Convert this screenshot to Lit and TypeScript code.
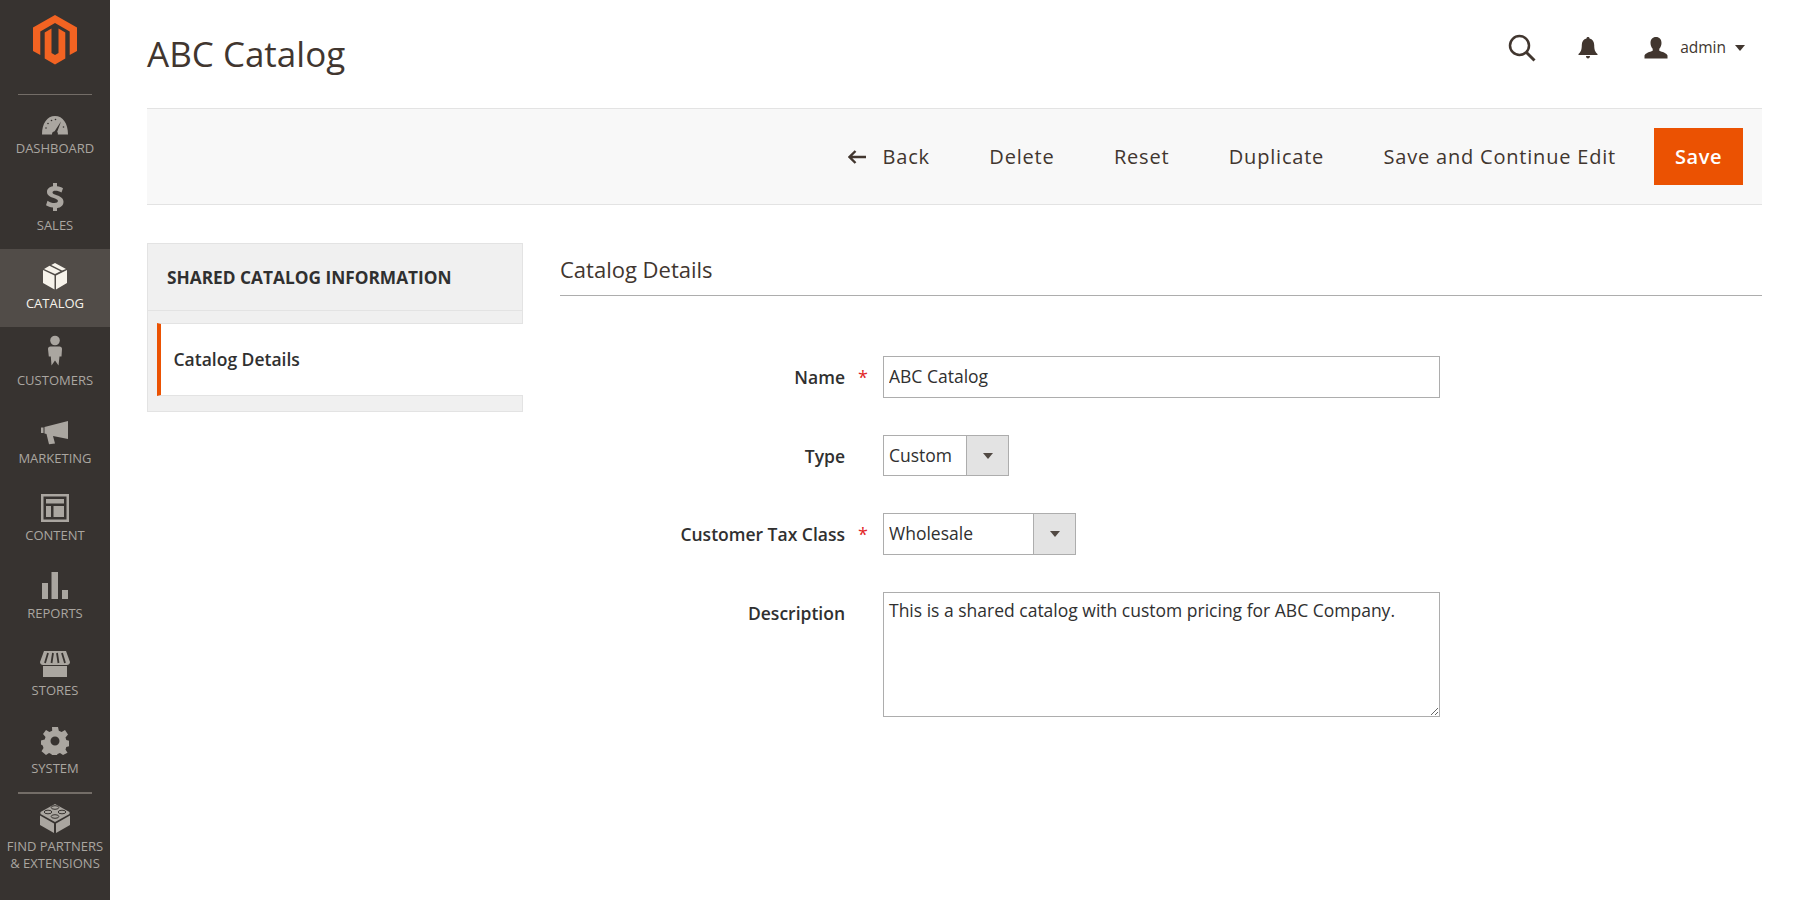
import { LitElement, html, css, svg } from "lit";
import { customElement } from "lit/decorators.js";

const icons: Record<string, unknown> = {
  dashboard: svg`<svg width="28" height="20" viewBox="0 0 28 20"><path fill-rule="evenodd" fill="currentColor" d="M1 19.500C1 8.500 6 1 14 1s13 7.500 13 18.500H16.800a3 3 0 0 0-.6-2.800L20 6.500l-6.400 9.700a3.200 3.200 0 0 0-2.600 3.300Z"/><g fill="#373330"><circle cx="5" cy="13" r=".8"/><circle cx="7" cy="8.500" r=".8"/><circle cx="10.500" cy="5.500" r=".8"/><circle cx="14.500" cy="4.500" r=".8"/><circle cx="22.500" cy="12" r=".8"/></g></svg>`,
  sales: svg`<svg width="20" height="30" viewBox="0 0 20 30"><path fill="currentColor" d="M8 1h4v3.200c2.500.3 4.500 1 6 2l-1.500 4.300c-2-1.200-4-1.800-6-1.800-2 0-3 .7-3 1.700 0 1.200 1.400 1.800 4.300 2.800 4.500 1.500 6.700 3.300 6.700 6.600 0 3.500-2.400 5.800-6.500 6.400V29H8v-3.600c-2.800-.2-5.200-1-7-2.200l1.500-4.400c2.200 1.400 4.700 2.300 7 2.300 2.200 0 3.400-.8 3.400-2 0-1.300-1.300-2-4.100-3C4.300 14.700 2 13 2 9.800 2 6.900 4.200 4.700 8 4.200Z"/></svg>`,
  catalog: svg`<svg width="26" height="28" viewBox="0 0 26 28"><path fill="currentColor" d="M12.500 13.500 1 8v13l11.500 6.500Zm1.500 0V27.500L25 21V8Zm-1-1.500L2 7l5.500-3.200 11 5.400Zm7-3.600L9.200 3 13 1l11 6Z"/></svg>`,
  customers: svg`<svg width="16" height="32" viewBox="0 0 16 32"><circle cx="8" cy="5.500" r="4.800" fill="currentColor"/><path fill="currentColor" d="M3.500 11.500h9c1.600 0 2.500 1 2.500 2.500l-.5 7.500h-2L11.500 30.500 8 25.500l-3.500 5-.7-9h-2L1 14c0-1.500.9-2.500 2.500-2.500Z"/></svg>`,
  marketing: svg`<svg width="28" height="24" viewBox="0 0 28 24"><path fill="currentColor" d="M0 6.500h2.500v5.500H0Zm3.500-.5L27 0v18l-15-3 2 7.500-6 .7L5.500 13l-2-.5Z"/></svg>`,
  content: svg`<svg width="28" height="28" viewBox="0 0 28 28"><path fill-rule="evenodd" fill="currentColor" d="M0 0h28v28H0Zm2.500 2.500v23h23v-23ZM5 5h18v4.500H5Zm0 7h5v11H5Zm7.500 0H23v11H12.500Z"/></svg>`,
  reports: svg`<svg width="26" height="28" viewBox="0 0 26 28"><path fill="currentColor" d="M0 11h6v16H0Zm9.500-11H16v27H9.500ZM20 18h6v9h-6Z"/></svg>`,
  stores: svg`<svg width="30" height="26" viewBox="0 0 30 26"><path fill="currentColor" d="M4 0h22l4 11c0 2-1.500 3-3 3H3c-1.500 0-3-1-3-3Z"/><path fill="currentColor" d="M3 15h24v11H3Z"/><path stroke="#373330" stroke-width="1.800" fill="none" d="M8 2 5 12M13 2l-1.500 10M17 2l1.500 10M22 2l3 10"/></svg>`,
  system: svg`<svg width="28" height="28" viewBox="0 0 28 28"><path fill-rule="evenodd" fill="currentColor" d="M11 0h6l.8 3.800 2.800 1.200L24 3l3 4.500-2.500 3 .8 2.500 3.700 1v5l-3.700 1-.8 2.500 2 3.200L22 28l-3-2-2.500 1-.5 1h-5l-.8-1L8 26l-3 2-4.500-3.800 2-3.200-.8-2.500L0 17.500v-4l3.700-1 .8-2.500-2.500-3L5 3l3.400 2 2.800-1.200Zm3 9.500a4.500 4.500 0 1 0 0 9 4.500 4.500 0 0 0 0-9Z"/></svg>`,
  partners: svg`<svg width="30" height="29" viewBox="0 0 30 29"><path fill="currentColor" d="M15 0 29.500 8v2L15 18 .5 10V8Z"/><path fill="currentColor" d="M0 11.500 14 19.500V29L0 21Zm30 0V21l-14 8V19.500Z"/><g fill="none" stroke="#373330" stroke-width="1"><ellipse cx="15" cy="3.500" rx="3.800" ry="1.800"/><ellipse cx="8" cy="8" rx="3.800" ry="1.800"/><ellipse cx="22" cy="8" rx="3.800" ry="1.800"/><ellipse cx="15" cy="12.500" rx="3.800" ry="1.800"/></g></svg>`,
};

const menu = [
  ["dashboard", "DASHBOARD"],
  ["sales", "SALES"],
  ["catalog", "CATALOG"],
  ["customers", "CUSTOMERS"],
  ["marketing", "MARKETING"],
  ["content", "CONTENT"],
  ["reports", "REPORTS"],
  ["stores", "STORES"],
  ["system", "SYSTEM"],
];

@customElement("app-root")
export class AppRoot extends LitElement {
  static styles = css`
    :host {
      display: block;
      height: 900px;
      overflow: hidden;
      background: #fff;
      font-family: "Open Sans", sans-serif;
      color: #303030;
    }
    .page { display: flex; height: 900px; }
    .side {
      width: 110px;
      flex: none;
      background: #373330;
      color: #aaa6a0;
      display: flex;
      flex-direction: column;
      align-items: stretch;
      font-size: 13px;
      text-align: center;
    }
    .logo { display: flex; justify-content: center; padding-top: 15px; height: 79px; box-sizing: content-box; }
    .rule { height: 1px; background: #736d67; margin: 0 18px -1px; }
    .rule.low { margin: 0 18px; height: 2px; }
    .item {
      height: 77.5px;
      box-sizing: border-box;
      display: flex;
      flex-direction: column;
      align-items: center;
      justify-content: flex-end;
      padding-bottom: 15.600px;
      line-height: 16px;
      flex: none;
    }
    .item svg { display: block; margin-bottom: 5px; }
    .item.active { background: #514c48; color: #f7f3eb; }
    .foot { align-items: center; display: flex; flex-direction: column; padding-top: 10px; line-height: 17px; color: #aaa6a0; }
    .foot svg { display: block; margin-bottom: 5px; }

    .main { flex: 1; padding: 0 35px 0 37px; min-width: 0; }
    .top { height: 108px; display: flex; align-items: flex-start; justify-content: space-between; }
    h1 {
      margin: 31px 0 0;
      font-weight: 400;
      font-size: 35px;
      line-height: 46px;
      color: #41362f;
    }
    .actions { display: flex; align-items: center; padding-top: 34px; padding-right: 17px; color: #41362f; }
    .actions .s { margin-right: 42px; display: block; }
    .actions .b { margin-right: 46px; display: block; }
    .user { display: flex; align-items: center; font-size: 15.500px; color: #41362f; }
    .user svg { display: block; }
    .user span { margin: -2px 9px 0 12px; }
    .tri { width: 0; height: 0; border: 5px solid transparent; border-top: 6px solid #41362f; border-bottom: 0; }
    .toolbar {
      height: 97px;
      box-sizing: border-box;
      background: #f8f8f8;
      border-top: 1px solid #e3e3e3;
      border-bottom: 1px solid #e3e3e3;
      display: flex;
      align-items: center;
      justify-content: flex-end;
      padding-right: 19px;
      font-size: 20px;
      letter-spacing: 0.8px;
      color: #41362f;
      font-weight: 400;
    }
    .toolbar .lnk { margin-right: 59.400px; display: flex; align-items: center; }
    .toolbar .lnk.last { margin-right: 38px; }
    .toolbar svg { margin-right: 17px; display: block; }
    .save {
      background: #eb5202;
      color: #fff;
      font-weight: 600;
      width: 89px;
      height: 57px;
      display: flex;
      align-items: center;
      justify-content: center;
      letter-spacing: 0.5px;
    }
    .content { display: flex; padding-top: 38px; align-items: flex-start; }
    .panel {
      width: 376px;
      height: 169px;
      box-sizing: border-box;
      flex: none;
      background: #f0f0f0;
      border: 1px solid #e3e3e3;
      margin-right: 37px;
      display: flex;
      flex-direction: column;
    }
    .panel h3 {
      margin: 0;
      height: 67px;
      box-sizing: border-box;
      border-bottom: 1px solid #e3e3e3;
      padding: 0 0 0 19px;
      display: flex;
      align-items: center;
      font-size: 17.300px;
      font-weight: 700;
      color: #303030;
    }
    .tab {
      margin: 12px -1px 0 9px;
      height: 73px;
      box-sizing: border-box;
      background: #fff;
      border-left: 4px solid #eb5202;
      border-top: 1px solid #e3e3e3;
      border-bottom: 1px solid #e3e3e3;
      padding: 0 0 2px 12.500px;
      display: flex;
      align-items: center;
      font-size: 17.500px;
      font-weight: 600;
      color: #303030;
    }
    .form { flex: 1; min-width: 0; }
    h2 {
      margin: 0;
      height: 53px;
      box-sizing: border-box;
      border-bottom: 1px solid #adadad;
      font-size: 22px;
      font-weight: 400;
      line-height: 53px;
      color: #41362f;
    }
    .rows { padding-top: 60px; display: grid; grid-template-columns: 285px 38px 1fr; row-gap: 37px; align-items: start; }
    label {
      text-align: right;
      font-size: 17.500px;
      font-weight: 600;
      color: #303030;
      line-height: 24px;
      padding-top: 9px;
    }
    .star { color: #e22626; font-size: 18px; line-height: 24px; padding-top: 9px; text-align: right; padding-right: 15px; }
    input, select, textarea {
      font-family: "Open Sans", sans-serif;
      font-size: 17.500px;
      color: #303030;
      border: 1px solid #adadad;
      background: #fff;
      box-sizing: border-box;
      padding: 0 5px 2px;
      outline: none;
      margin: 0;
      display: block;
      border-radius: 0;
    }
    input { width: 557px; height: 42px; }
    textarea { width: 557px; height: 125px; padding-top: 5px; line-height: 24px; }
    .sel { position: relative; height: 42px; }
    .sel.t { width: 126px; height: 41px; }
    .sel.w { width: 193px; }
    select { appearance: none; width: 100%; height: 100%; }
    .arrow {
      position: absolute;
      right: 0;
      top: 0;
      bottom: 0;
      width: 43px;
      box-sizing: border-box;
      background: #e3e3e3;
      border: 1px solid #adadad;
      display: flex;
      align-items: center;
      justify-content: center;
      pointer-events: none;
    }
    .arrow i { width: 0; height: 0; border: 5px solid transparent; border-top: 6px solid #514943; border-bottom: 0; }
  `;

  render() {
    return html`
      <div class="page">
        <nav class="side">
          <div class="logo">
            <svg width="44" height="50" viewBox="0 0 44 50"><path fill="#f26322" d="M22 0 44 12.500V36L36.700 40V16.500L22 8 7.300 16.500V40L0 36V12.500Z"/><path fill="#f26322" d="M22 49.500 32.300 43.500V17.500L25.500 13.500V38L22 40 18.500 38V13.500L11.700 17.500V43.500Z"/></svg>
          </div>
          <div class="rule"></div>
          ${menu.map(
            ([k, t]) => html`<div class="item ${k === "catalog" ? "active" : ""}">${icons[k]}<span>${t}</span></div>`
          )}
          <div class="rule low"></div>
          <div class="foot">${icons.partners}<span>FIND PARTNERS<br />&amp; EXTENSIONS</span></div>
        </nav>
        <div class="main">
          <header class="top">
            <h1>ABC Catalog</h1>
            <div class="actions">
              <svg class="s" width="28" height="28" viewBox="0 0 28 28"><circle cx="11.500" cy="11.500" r="9.500" fill="none" stroke="#41362f" stroke-width="2.500"/><path d="M18.500 18.500 26.500 26.500" stroke="#41362f" stroke-width="3"/></svg>
              <svg class="b" width="20" height="22" viewBox="0 0 20 22"><path fill="#41362f" d="M10 0c1 0 1.500.6 1.500 1.400 3 .8 4.700 3 4.700 6.600 0 5 1 7 3.300 9v1H.5v-1C2.800 15 3.800 13 3.800 8c0-3.600 1.700-5.800 4.700-6.600C8.500.6 9 0 10 0ZM8 19h4c0 1.500-.8 2.500-2 2.500S8 20.500 8 19Z"/></svg>
              <div class="user">
                <svg width="24" height="22" viewBox="0 0 24 22"><path fill="#41362f" d="M12 0c3.500 0 5.500 2.500 5.500 6 0 2.500-1 4.500-2.200 5.800v2c3 1.200 7 2.200 8.200 4.700v3H.5v-3c1.200-2.500 5.200-3.500 8.200-4.700v-2C7.500 10.500 6.500 8.500 6.500 6 6.500 2.500 8.500 0 12 0Z"/></svg>
                <span>admin</span><div class="tri"></div>
              </div>
            </div>
          </header>
          <div class="toolbar">
            <div class="lnk"><svg width="18" height="14" viewBox="0 0 18 14"><path d="M7.500 1 1.500 7l6 6M2 7h16" fill="none" stroke="#41362f" stroke-width="2.400"/></svg>Back</div>
            <div class="lnk">Delete</div>
            <div class="lnk">Reset</div>
            <div class="lnk">Duplicate</div>
            <div class="lnk last">Save and Continue Edit</div>
            <div class="save">Save</div>
          </div>
          <div class="content">
            <aside class="panel">
              <h3>SHARED CATALOG INFORMATION</h3>
              <div class="tab">Catalog Details</div>
            </aside>
            <section class="form">
              <h2>Catalog Details</h2>
              <div class="rows">
                <label>Name</label><div class="star">*</div>
                <input value="ABC Catalog" />
                <label>Type</label><div class="star"></div>
                <div class="sel t"><select><option>Custom</option></select><div class="arrow"><i></i></div></div>
                <label>Customer Tax Class</label><div class="star">*</div>
                <div class="sel w"><select><option>Wholesale</option></select><div class="arrow"><i></i></div></div>
                <label>Description</label><div class="star"></div>
                <textarea>This is a shared catalog with custom pricing for ABC Company.</textarea>
              </div>
            </section>
          </div>
        </div>
      </div>
    `;
  }
}
